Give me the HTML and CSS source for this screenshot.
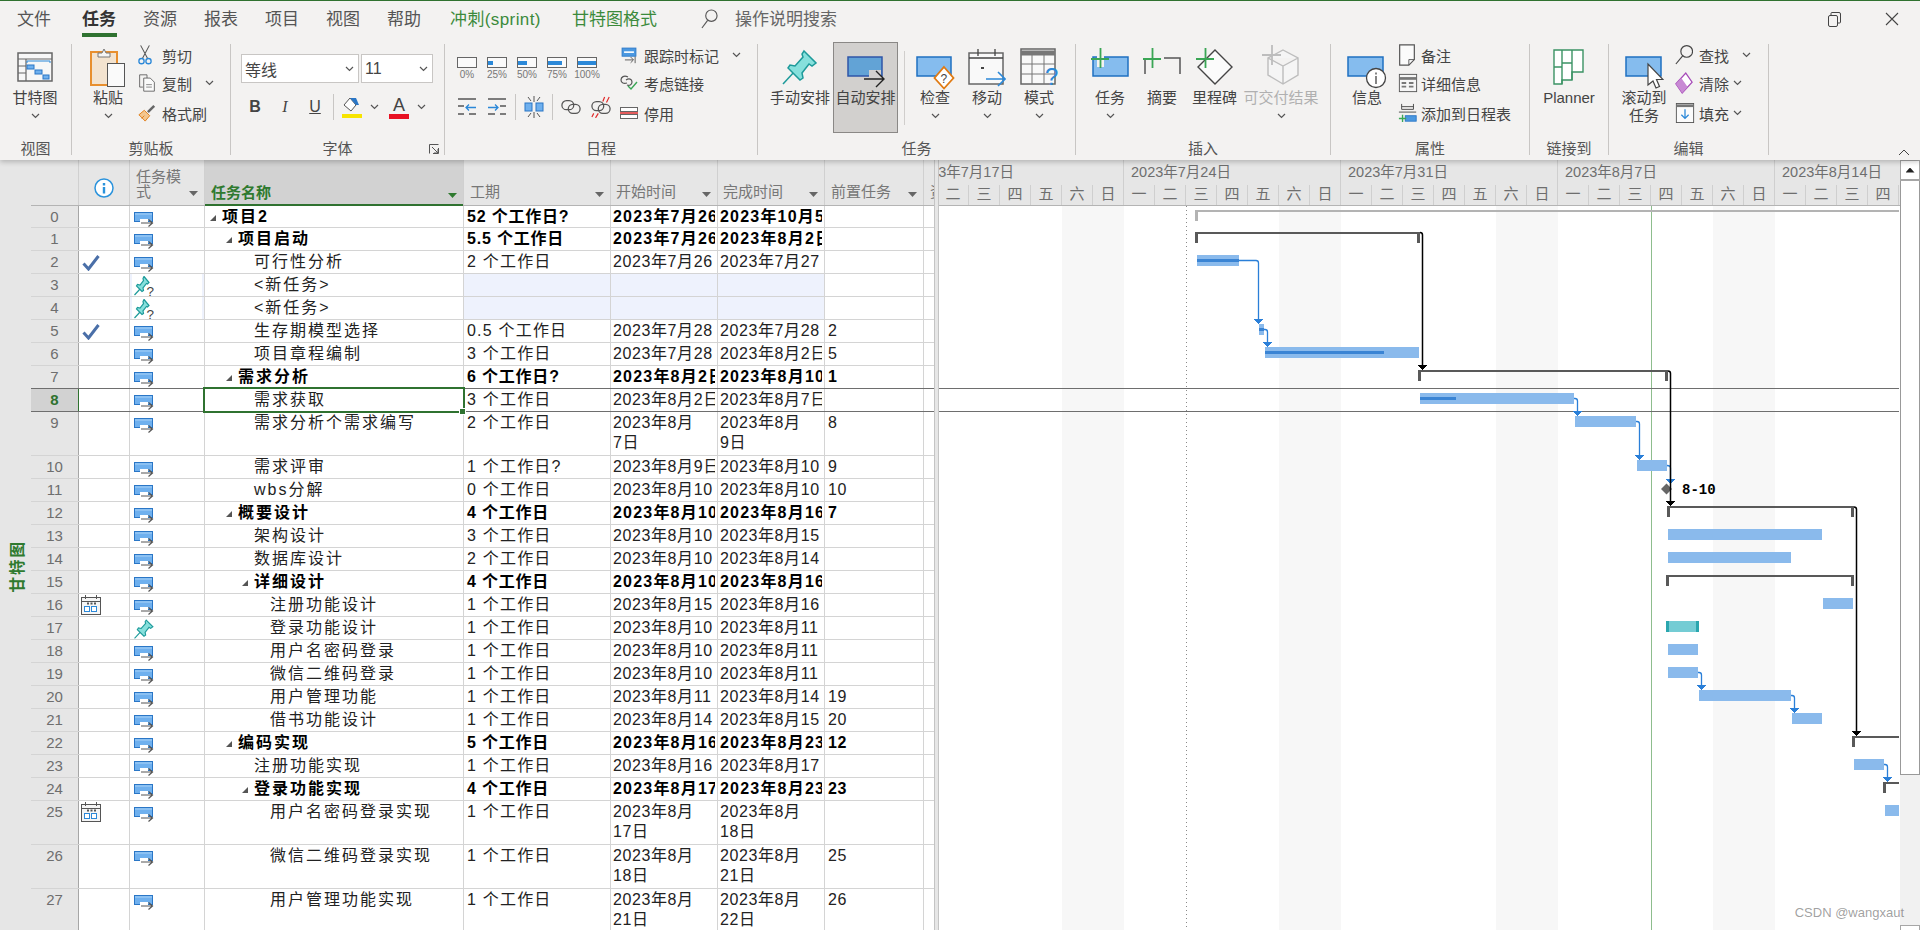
FILE: index.html
```html
<!DOCTYPE html>
<html lang="zh-CN">
  <head>
    <meta charset="UTF-8" />
    <title>项目2 - Project</title>
    <link rel="stylesheet" href="styles.css">
  </head>
  <body>
    <!-- 图标 -->
    <svg class="sprite" xmlns="http://www.w3.org/2000/svg">
      <symbol id="i-auto" viewBox="0 0 20 16">
        <rect x="0.5" y="0.5" width="18" height="9" fill="#6fb0ee" stroke="#2a76c6"/>
        <path d="M1 2h17" stroke="#a9d2f7"/>
        <path d="M6 7h8v4h5v4H6z" fill="#fff"/>
        <path d="M7 11h11M14.5 7.500l4 3.500-4 3.500" fill="none" stroke="#555" stroke-width="1.200"/>
      </symbol>
      <symbol id="i-pin" viewBox="0 0 36 36">
        <path d="M1 35L13 22" stroke="#1d9a9a" stroke-width="2"/>
        <path d="M22 2L34 14 30 17 27 15 20 24 21 29 18 31 6 19 8 16 13 17 21 8 20 5z" fill="#86e0dc" stroke="#1d9a9a" stroke-width="2"/>
      </symbol>
      <symbol id="i-pinq" viewBox="0 0 40 40">
        <path d="M1 38L13 25" stroke="#1d9a9a" stroke-width="2.400"/>
        <path d="M20 1L30 13 27 16 25 15 18 24 19 29 16 31 5 20 7 17 12 18 19 9 18 5z" fill="#86e0dc" stroke="#1d9a9a" stroke-width="2.400"/>
        <text x="25" y="39" font-size="27" font-family="Liberation Sans" fill="#444">?</text>
      </symbol>
      <symbol id="i-check" viewBox="0 0 18 16">
        <path d="M1.500 8.500l5 5.500L16.500 1" fill="none" stroke="#4a6fa8" stroke-width="3"/>
      </symbol>
      <symbol id="i-cal" viewBox="0 0 20 20">
        <rect x="0.500" y="2.500" width="19" height="17" fill="#f5f5f5" stroke="#555"/>
        <path d="M1 6.500h18M4.500 0v4M15.500 0v4" stroke="#555"/>
        <path d="M6 8.500h2M9.500 8.500h2M13 8.500h2" stroke="#555" stroke-width="2"/>
        <rect x="3.500" y="11.500" width="5" height="5" fill="#fff" stroke="#2b88d8"/>
        <rect x="10.500" y="11.500" width="5" height="5" fill="#fff" stroke="#2b88d8"/>
      </symbol>
      <symbol id="i-info" viewBox="0 0 20 20">
        <circle cx="10" cy="10" r="9" fill="#fff" stroke="#2b93dc" stroke-width="1.500"/>
        <path d="M10 5v2.500M10 9v6.500" stroke="#2b93dc" stroke-width="2.400"/>
      </symbol>
      <symbol id="i-chev" viewBox="0 0 9 6">
        <path d="M1 1l3.500 3.500L8 1" fill="none" stroke="#555" stroke-width="1.200"/>
      </symbol>
      <symbol id="i-gantt" viewBox="0 0 36 30">
        <rect x="1" y="1" width="34" height="28" fill="#f7f7f7" stroke="#666" stroke-width="1.500"/>
        <path d="M1 7h34M9 7v22M1 14h8M1 21h8" stroke="#666" stroke-width="1.200"/>
        <path d="M10 11V9h23v2" fill="none" stroke="#2b88d8"/>
        <rect x="10" y="13" width="7" height="4" fill="#6fb0ee" stroke="#2a76c6"/>
        <rect x="18" y="18" width="7" height="4" fill="#6fb0ee" stroke="#2a76c6"/>
        <rect x="26" y="23" width="6" height="4" fill="#6fb0ee" stroke="#2a76c6"/>
      </symbol>
      <symbol id="i-paste" viewBox="0 0 36 40">
        <rect x="1" y="5" width="26" height="33" fill="#f3e3cf" stroke="#e88f2e" stroke-width="2"/>
        <path d="M8 10V6h4l2-4 2 4h4v4z" fill="#f5f5f5" stroke="#777"/>
        <rect x="17.500" y="16.500" width="17" height="23" fill="#fafafa" stroke="#555"/>
      </symbol>
      <symbol id="i-cut" viewBox="0 0 16 24">
        <path d="M3 1l8 15M13 1L5 16" stroke="#555" fill="none" stroke-width="1.200"/>
        <circle cx="4" cy="19" r="3" fill="none" stroke="#2b88d8" stroke-width="1.500"/>
        <circle cx="12" cy="19" r="3" fill="none" stroke="#2b88d8" stroke-width="1.500"/>
      </symbol>
      <symbol id="i-copy" viewBox="0 0 20 22">
        <path d="M1 1h9v4M1 1v15h4" fill="none" stroke="#555"/>
        <path d="M6 5h8l5 5v11H6z" fill="#fafafa" stroke="#555"/>
        <path d="M9 13h7M9 16h7" stroke="#777"/>
      </symbol>
      <symbol id="i-brush" viewBox="0 0 20 20">
        <path d="M1 12l6-5 6 6-5 6z" fill="#f3c68f" stroke="#e07a12"/>
        <path d="M10 8l7-7 2 2-7 7z" fill="#666"/>
        <path d="M4 16l3-3" stroke="#e07a12"/>
      </symbol>
      <symbol id="i-fill" viewBox="0 0 20 22">
        <path d="M2 9l6-7 6 7-5 6z" fill="#fff" stroke="#555"/>
        <path d="M8 2l6 7h3l-3-7z" fill="#2a76c6"/>
        <rect x="0" y="18" width="20" height="4" fill="#f7e400"/>
      </symbol>
      <symbol id="i-outdent" viewBox="0 0 20 18">
        <path d="M1 1h18M1 8h6M1 16h6M12 16h7M14 1" stroke="#555" stroke-width="1.300"/>
        <path d="M19 9.500H9M12 6.500l-3 3 3 3" fill="none" stroke="#2b88d8" stroke-width="1.300"/>
      </symbol>
      <symbol id="i-indent" viewBox="0 0 20 18">
        <path d="M1 1h18M13 8h6M13 16h6M1 16h7" stroke="#555" stroke-width="1.300"/>
        <path d="M1 9.500h10M8 6.500l3 3-3 3" fill="none" stroke="#2b88d8" stroke-width="1.300"/>
      </symbol>
      <symbol id="i-split" viewBox="0 0 20 22">
        <rect x="1" y="7" width="7" height="8" fill="#6fb0ee" stroke="#2a76c6"/>
        <rect x="12" y="7" width="7" height="8" fill="#6fb0ee" stroke="#2a76c6"/>
        <path d="M10 0v6M10 16v6M4 1l3 4M16 1l-3 4M4 21l3-4M16 21l-3-4" stroke="#555"/>
      </symbol>
      <symbol id="i-link" viewBox="0 0 22 18">
        <rect x="1" y="2" width="13" height="10" rx="5" fill="none" stroke="#555" stroke-width="1.400"/>
        <rect x="8" y="6" width="13" height="10" rx="5" fill="none" stroke="#555" stroke-width="1.400"/>
      </symbol>
      <symbol id="i-unlink" viewBox="0 0 22 24">
        <rect x="1" y="6" width="13" height="10" rx="5" fill="none" stroke="#555" stroke-width="1.400"/>
        <rect x="8" y="9" width="13" height="10" rx="5" fill="none" stroke="#555" stroke-width="1.400"/>
        <path d="M15 1l-2 5M20 1l-3 6M3 19l-2 4M8 19l-3 5" stroke="#e02b2b" stroke-width="1.300"/>
      </symbol>
      <symbol id="i-track" viewBox="0 0 18 22">
        <rect x="0.500" y="2.500" width="17" height="10" fill="#4b98e0" stroke="#2a76c6"/>
        <path d="M3 7.500h12" stroke="#fff" stroke-width="2"/>
        <path d="M4 17h10M11 13.500l3.500 3.500-3.500 3.500M16.500 13v8" fill="none" stroke="#444"/>
      </symbol>
      <symbol id="i-respect" viewBox="0 0 18 16">
        <path d="M8 2C4 0 1 2 1 5s3 4 6 3M6 5c3-2 6-1 6 2s-3 4-5 3" fill="none" stroke="#555" stroke-width="1.200"/>
        <path d="M8 11l3 3 6-7" fill="none" stroke="#3aa655" stroke-width="1.400"/>
      </symbol>
      <symbol id="i-inactive" viewBox="0 0 18 14">
        <rect x="0.500" y="1.500" width="17" height="4" fill="#fff" stroke="#666"/>
        <rect x="0.500" y="8.500" width="17" height="4" fill="#fff" stroke="#666"/>
        <path d="M0 7h18" stroke="#e02b2b" stroke-width="1.500"/>
      </symbol>
      <symbol id="i-manual" viewBox="0 0 36 36">
        <path d="M1 35L13 22" stroke="#1d9a9a" stroke-width="1.500"/>
        <path d="M22 2L34 14 30 17 27 15 20 24 21 29 18 31 6 19 8 16 13 17 21 8 20 5z" fill="#86e0dc" stroke="#1d9a9a" stroke-width="1.500"/>
      </symbol>
      <symbol id="i-autobig" viewBox="0 0 38 36">
        <rect x="1" y="1" width="34" height="19" fill="#62a3d6" stroke="#2f55a8" stroke-width="1.500"/>
        <path d="M22 20v-6h12v16H22z" fill="#d2d0ce"/>
        <path d="M17 23h20M29 15l8 8-8 8" fill="none" stroke="#222" stroke-width="1.400"/>
      </symbol>
      <symbol id="i-inspect" viewBox="0 0 38 36">
        <rect x="1" y="1" width="34" height="19" fill="#85bcee" stroke="#1f70c1" stroke-width="1.500"/>
        <path d="M28 11l9.500 11L28 32.500 18.500 22z" fill="#fff" stroke="#e07a12" stroke-width="1.800"/>
        <text x="24.500" y="27" font-size="12" font-family="Liberation Sans" fill="#444">?</text>
      </symbol>
      <symbol id="i-move" viewBox="0 0 38 44">
        <rect x="1" y="8" width="34" height="31" fill="#f9f9f9" stroke="#666" stroke-width="1.500"/>
        <path d="M1 13h34M10 4v7M27 4v7" stroke="#444" stroke-width="1.300"/>
        <path d="M13 23h3" stroke="#444" stroke-width="2"/>
        <path d="M18 34h19M30 27l7 7-7 7" fill="none" stroke="#2b88d8" stroke-width="1.600"/>
      </symbol>
      <symbol id="i-mode" viewBox="0 0 38 44">
        <rect x="1" y="4" width="34" height="35" fill="#f9f9f9" stroke="#666" stroke-width="1.500"/>
        <path d="M1 8h34" stroke="#777" stroke-width="5"/>
        <path d="M12 10v29M24 10v29M1 19h34M1 29h34" stroke="#777"/>
        <text x="25" y="40" font-size="24" font-family="Liberation Sans" fill="#2b88d8">?</text>
      </symbol>
      <symbol id="i-newtask" viewBox="0 0 38 40">
        <rect x="2" y="12" width="35" height="19" fill="#85bcee" stroke="#1f70c1" stroke-width="1.500"/>
        <rect x="6" y="11" width="7" height="11" fill="#f3f2f1"/>
        <path d="M9.500 3v20M0 14h18" stroke="#3aa655" stroke-width="1.800"/>
      </symbol>
      <symbol id="i-summary" viewBox="0 0 38 40">
        <path d="M2 14v15M21 13h16v16" fill="none" stroke="#555" stroke-width="1.500"/>
        <path d="M9.500 3v20M0 14h18" stroke="#3aa655" stroke-width="1.800"/>
      </symbol>
      <symbol id="i-mile" viewBox="0 0 38 40">
        <path d="M19 5l17 17-17 17L2 22z" fill="#fbfbfb" stroke="#444" stroke-width="1.400"/>
        <path d="M9.500 3v20M0 14h18" stroke="#3aa655" stroke-width="1.800"/>
      </symbol>
      <symbol id="i-deliver" viewBox="0 0 38 40">
        <path d="M21 5l15 8v17l-15 9-15-9V13zM6 13l15 8 15-8M21 21v18" fill="#f5f5f5" stroke="#bdbdbd" stroke-width="1.400"/>
        <path d="M10 0v20M0 10h19" stroke="#bdbdbd" stroke-width="1.800"/>
      </symbol>
      <symbol id="i-infobig" viewBox="0 0 40 36">
        <rect x="1" y="1" width="35" height="19" fill="#85bcee" stroke="#1f70c1" stroke-width="1.500"/>
        <circle cx="29" cy="22" r="9.500" fill="#fff" stroke="#444" stroke-width="1.300"/>
        <path d="M29 16.500v2M29 20v8" stroke="#444" stroke-width="1.300"/>
      </symbol>
      <symbol id="i-note" viewBox="0 0 18 24">
        <path d="M1 1h16v16l-6 6H1z" fill="#fbfbfb" stroke="#555" stroke-width="1.300"/>
        <path d="M11 23v-6h6" fill="none" stroke="#555"/>
      </symbol>
      <symbol id="i-detail" viewBox="0 0 20 22">
        <rect x="0.500" y="1.500" width="19" height="19" fill="#f5f5f5" stroke="#555"/>
        <path d="M1 6h18" stroke="#777" stroke-width="3"/>
        <path d="M3 11h5M3 15h5M11 11h5M11 15h5" stroke="#777" stroke-width="2"/>
      </symbol>
      <symbol id="i-addtl" viewBox="0 0 20 22">
        <path d="M3 1v6h13V1M3 4h13M0 10h19" fill="none" stroke="#444"/>
        <rect x="7" y="14" width="12" height="6" fill="#4b98e0" stroke="#2a76c6"/>
        <path d="M4 13v8M0 17h8" stroke="#3aa655" stroke-width="1.500"/>
      </symbol>
      <symbol id="i-planner" viewBox="0 0 32 36">
        <path d="M1 1h29v22H19v8H9v4H1z" fill="#fff" stroke="#3b9364" stroke-width="1.400"/>
        <path d="M9 1v34M19 1v30M1 18h8M9 14h10" stroke="#3b9364" stroke-width="1.400"/>
      </symbol>
      <symbol id="i-scroll" viewBox="0 0 40 36">
        <rect x="2" y="1" width="35" height="19" fill="#85bcee" stroke="#1f70c1" stroke-width="1.500"/>
        <path d="M24 8v21l5-4 3 7 3.500-1.500-3-7H39z" fill="#fff" stroke="#444" stroke-width="1.200"/>
      </symbol>
      <symbol id="i-find" viewBox="0 0 20 24">
        <circle cx="13" cy="8" r="6.500" fill="none" stroke="#444" stroke-width="1.300"/>
        <path d="M8.500 13L1 22" stroke="#444" stroke-width="1.300"/>
      </symbol>
      <symbol id="i-clear" viewBox="0 0 20 24">
        <path d="M12 1l7 10-11 12L1 13z" fill="#fff" stroke="#a64ab8" stroke-width="1.400"/>
        <path d="M1 13l7 10 6-6.500-7-10z" fill="#c88ad4"/>
      </symbol>
      <symbol id="i-filld" viewBox="0 0 20 22">
        <rect x="0.500" y="0.500" width="19" height="21" fill="#fbfbfb" stroke="#555"/>
        <path d="M1 3h18" stroke="#777" stroke-width="3"/>
        <path d="M10 7v10M6 13l4 4 4-4" fill="none" stroke="#2b88d8" stroke-width="1.400"/>
      </symbol>
      <symbol id="i-search" viewBox="0 0 18 22">
        <circle cx="11" cy="7" r="6" fill="none" stroke="#555" stroke-width="1.200"/>
        <path d="M7 12l-6 8" stroke="#555" stroke-width="1.200"/>
      </symbol>
      <symbol id="i-restore" viewBox="0 0 13 15">
        <rect x="0.500" y="3.500" width="9" height="11" rx="1.500" fill="none" stroke="#444"/>
        <path d="M3 3V1.500Q3 .5 4 .5h7q1.500 0 1.500 1.500v8q0 1-1 1H10" fill="none" stroke="#444"/>
      </symbol>
      <symbol id="i-close" viewBox="0 0 14 14">
        <path d="M1 1l12 12M13 1L1 13" stroke="#444" stroke-width="1.100"/>
      </symbol>
    </svg>

    <header class="ribbon">
      <nav class="tabs">
        <span class="tab t-file">文件</span>
        <span class="tab t-on">任务</span>
        <span class="tab">资源</span>
        <span class="tab">报表</span>
        <span class="tab">项目</span>
        <span class="tab">视图</span>
        <span class="tab">帮助</span>
        <span class="tab t-green t-sprint">冲刺(sprint)</span>
        <span class="tab t-green t-format">甘特图格式</span>
        <svg class="ic-search"><use href="#i-search"/></svg>
        <span class="tab t-search">操作说明搜索</span>
        <svg class="ic-restore"><use href="#i-restore"/></svg>
        <svg class="ic-close"><use href="#i-close"/></svg>
      </nav>

      <div class="groups">
        <section class="group g-view">
          <div class="body">
            <div class="big w-70"><div class="bi"><svg class="s36x30"><use href="#i-gantt"/></svg></div><span>甘特图</span><svg class="chev"><use href="#i-chev"/></svg></div>
          </div>
          <div class="glabel">视图</div>
        </section>

        <section class="group g-clip">
          <div class="body">
            <div class="big w-60"><div class="bi"><svg class="s36x40"><use href="#i-paste"/></svg></div><span>粘贴</span><svg class="chev"><use href="#i-chev"/></svg></div>
            <div class="col">
              <div class="sm"><span class="si"><svg class="s14x22"><use href="#i-cut"/></svg></span>剪切</div>
              <div class="sm"><span class="si"><svg class="s18"><use href="#i-copy"/></svg></span>复制<svg class="chev ml-13"><use href="#i-chev"/></svg></div>
              <div class="sm"><span class="si"><svg class="s18"><use href="#i-brush"/></svg></span>格式刷</div>
            </div>
          </div>
          <div class="glabel">剪贴板</div>
        </section>

        <section class="group g-font">
          <div class="body fontbody">
            <div class="combos">
              <div class="combo c-name">等线<svg class="chev"><use href="#i-chev"/></svg></div>
              <div class="combo c-size">11<svg class="chev"><use href="#i-chev"/></svg></div>
            </div>
            <div class="fmt">
              <span class="fb f-b">B</span>
              <span class="fb f-i">I</span>
              <span class="fb f-u">U</span>
              <i class="vsep"></i>
              <svg class="s-fill"><use href="#i-fill"/></svg>
              <svg class="chev fchev"><use href="#i-chev"/></svg>
              <span class="f-a">A</span>
              <svg class="chev fchev"><use href="#i-chev"/></svg>
            </div>
          </div>
          <div class="glabel">字体</div>
          <svg class="launcher" viewBox="0 0 10 10"><path d="M.5 9.500V.5h9M9.500 4v5.500H4M3 3l6 6M9 5v4H5" fill="none" stroke="#555"/></svg>
        </section>

        <section class="group g-sched">
          <div class="body">
            <div class="pctblock">
              <div class="pcts">
                <div class="pct"><i class="pbox"></i>0%</div>
                <div class="pct"><i class="pbox"><b class="p25"></b></i>25%</div>
                <div class="pct"><i class="pbox"><b class="p50"></b></i>50%</div>
                <div class="pct"><i class="pbox"><b class="p75"></b></i>75%</div>
                <div class="pct"><i class="pbox"><b class="p100"></b></i>100%</div>
              </div>
              <div class="links">
                <span class="li"><svg class="s20x18"><use href="#i-outdent"/></svg></span>
                <span class="li"><svg class="s20x18"><use href="#i-indent"/></svg></span>
                <i class="vsep"></i>
                <span class="li"><svg class="s20x22"><use href="#i-split"/></svg></span>
                <i class="vsep"></i>
                <span class="li"><svg class="s20x18"><use href="#i-link"/></svg></span>
                <span class="li"><svg class="s20x22"><use href="#i-unlink"/></svg></span>
              </div>
            </div>
            <div class="col">
              <div class="sm"><span class="si"><svg class="s18"><use href="#i-track"/></svg></span>跟踪时标记<svg class="chev ml-13"><use href="#i-chev"/></svg></div>
              <div class="sm"><span class="si"><svg class="s18"><use href="#i-respect"/></svg></span>考虑链接</div>
              <div class="sm"><span class="si"><svg class="s18"><use href="#i-inactive"/></svg></span>停用</div>
            </div>
          </div>
          <div class="glabel">日程</div>
        </section>

        <section class="group g-task">
          <div class="body">
            <div class="big w-66"><div class="bi"><svg class="s36"><use href="#i-manual"/></svg></div><span>手动安排</span></div>
            <div class="big w-65 active"><div class="bi"><svg class="low"><use href="#i-autobig"/></svg></div><span>自动安排</span></div>
            <i class="tsep"></i>
            <div class="big w-52"><div class="bi"><svg class="low"><use href="#i-inspect"/></svg></div><span>检查</span><svg class="chev"><use href="#i-chev"/></svg></div>
            <div class="big w-52"><div class="bi"><svg class="s38x44"><use href="#i-move"/></svg></div><span>移动</span><svg class="chev"><use href="#i-chev"/></svg></div>
            <div class="big w-52"><div class="bi"><svg class="s38x44"><use href="#i-mode"/></svg></div><span>模式</span><svg class="chev"><use href="#i-chev"/></svg></div>
          </div>
          <div class="glabel">任务</div>
        </section>

        <section class="group g-insert">
          <div class="body">
            <div class="big w-52"><div class="bi"><svg class="s38x40"><use href="#i-newtask"/></svg></div><span>任务</span><svg class="chev"><use href="#i-chev"/></svg></div>
            <div class="big w-52"><div class="bi"><svg class="s38x40"><use href="#i-summary"/></svg></div><span>摘要</span></div>
            <div class="big w-53"><div class="bi"><svg class="s38x40"><use href="#i-mile"/></svg></div><span>里程碑</span></div>
            <div class="big w-80 off"><div class="bi"><svg class="s38x40"><use href="#i-deliver"/></svg></div><span>可交付结果</span><svg class="chev"><use href="#i-chev"/></svg></div>
          </div>
          <div class="glabel">插入</div>
        </section>

        <section class="group g-prop">
          <div class="body">
            <div class="big w-56"><div class="bi"><svg class="low"><use href="#i-infobig"/></svg></div><span>信息</span></div>
            <div class="col col-prop">
              <div class="sm"><span class="si"><svg class="s18x22"><use href="#i-note"/></svg></span>备注</div>
              <div class="sm"><span class="si"><svg class="s20"><use href="#i-detail"/></svg></span>详细信息</div>
              <div class="sm"><span class="si"><svg class="s20"><use href="#i-addtl"/></svg></span>添加到日程表</div>
            </div>
          </div>
          <div class="glabel">属性</div>
        </section>

        <section class="group g-link">
          <div class="body">
            <div class="big w-78"><div class="bi"><svg class="s32x36"><use href="#i-planner"/></svg></div><span>Planner</span></div>
          </div>
          <div class="glabel">链接到</div>
        </section>

        <section class="group g-edit">
          <div class="body">
            <div class="big w-62"><div class="bi"><svg class="low"><use href="#i-scroll"/></svg></div><span>滚动到<br>任务</span></div>
            <div class="col">
              <div class="sm"><span class="si"><svg class="s18x22"><use href="#i-find"/></svg></span>查找<svg class="chev ml-13"><use href="#i-chev"/></svg></div>
              <div class="sm"><span class="si"><svg class="s18x22"><use href="#i-clear"/></svg></span>清除<svg class="chev ml-4"><use href="#i-chev"/></svg></div>
              <div class="sm"><span class="si"><svg class="s20"><use href="#i-filld"/></svg></span>填充<svg class="chev ml-4"><use href="#i-chev"/></svg></div>
            </div>
          </div>
          <div class="glabel">编辑</div>
        </section>

        <svg class="collapse" viewBox="0 0 12 7"><path d="M1 6l5-5 5 5" fill="none" stroke="#444"/></svg>
      </div>
    </header>

    <main class="main">
      <div class="viewbar"><span>甘特图</span></div>

      <div class="sheet">
        <div class="row head">
          <div class="hc"></div>
          <div class="hc hc-info"><svg class="s20"><use href="#i-info"/></svg></div>
          <div class="hc hc-mode"><span>任务模<br>式</span><i class="drop"></i></div>
          <div class="hc hc-name"><span>任务名称</span><i class="drop"></i></div>
          <div class="hc"><span>工期</span><i class="drop"></i></div>
          <div class="hc hc-d"><span>开始时间</span><i class="drop"></i></div>
          <div class="hc hc-d"><span>完成时间</span><i class="drop"></i></div>
          <div class="hc"><span>前置任务</span><i class="drop"></i></div>
          <div class="hc hc-cut"><span>资源名称</span></div>
        </div>

        <div class="row r0 sum"><div class="num">0</div><div></div><div class="mode"><svg class="mi"><use href="#i-auto"/></svg></div><div class="name l0"><i class="tri"></i>项目2</div><div class="dur">52 个工作日?</div><div class="date">2023年7月26日</div><div class="date">2023年10月5日</div><div class="pred"></div><div></div></div>
        <div class="row sum"><div class="num">1</div><div></div><div class="mode"><svg class="mi"><use href="#i-auto"/></svg></div><div class="name l1"><i class="tri"></i>项目启动</div><div class="dur">5.5 个工作日</div><div class="date">2023年7月26日</div><div class="date">2023年8月2日</div><div class="pred"></div><div></div></div>
        <div class="row"><div class="num">2</div><div class="ind"><svg class="ci"><use href="#i-check"/></svg></div><div class="mode"><svg class="mi"><use href="#i-auto"/></svg></div><div class="name l2">可行性分析</div><div class="dur">2 个工作日</div><div class="date">2023年7月26</div><div class="date">2023年7月27</div><div class="pred"></div><div></div></div>
        <div class="row"><div class="num">3</div><div></div><div class="mode unset pinned"><svg class="mi"><use href="#i-pinq"/></svg></div><div class="name l2">&lt;新任务&gt;</div><div class="dur blank"></div><div class="date blank"></div><div class="date blank"></div><div class="pred"></div><div></div></div>
        <div class="row"><div class="num">4</div><div></div><div class="mode unset pinned"><svg class="mi"><use href="#i-pinq"/></svg></div><div class="name l2">&lt;新任务&gt;</div><div class="dur blank"></div><div class="date blank"></div><div class="date blank"></div><div class="pred"></div><div></div></div>
        <div class="row"><div class="num">5</div><div class="ind"><svg class="ci"><use href="#i-check"/></svg></div><div class="mode"><svg class="mi"><use href="#i-auto"/></svg></div><div class="name l2">生存期模型选择</div><div class="dur">0.5 个工作日</div><div class="date">2023年7月28</div><div class="date">2023年7月28</div><div class="pred">2</div><div></div></div>
        <div class="row"><div class="num">6</div><div></div><div class="mode"><svg class="mi"><use href="#i-auto"/></svg></div><div class="name l2">项目章程编制</div><div class="dur">3 个工作日</div><div class="date">2023年7月28</div><div class="date">2023年8月2日</div><div class="pred">5</div><div></div></div>
        <div class="row sum"><div class="num">7</div><div></div><div class="mode"><svg class="mi"><use href="#i-auto"/></svg></div><div class="name l1"><i class="tri"></i>需求分析</div><div class="dur">6 个工作日?</div><div class="date">2023年8月2日</div><div class="date">2023年8月10日</div><div class="pred">1</div><div></div></div>
        <div class="row sel"><div class="num">8</div><div class="ind"></div><div class="mode"><svg class="mi"><use href="#i-auto"/></svg></div><div class="name l2">需求获取</div><div class="dur">3 个工作日</div><div class="date">2023年8月2日</div><div class="date">2023年8月7日</div><div class="pred"></div><div></div></div>
        <div class="row tall"><div class="num">9</div><div></div><div class="mode"><svg class="mi"><use href="#i-auto"/></svg></div><div class="name l2">需求分析个需求编写</div><div class="dur">2 个工作日</div><div class="date">2023年8月<br>7日</div><div class="date">2023年8月<br>9日</div><div class="pred">8</div><div></div></div>
        <div class="row"><div class="num">10</div><div></div><div class="mode"><svg class="mi"><use href="#i-auto"/></svg></div><div class="name l2">需求评审</div><div class="dur">1 个工作日?</div><div class="date">2023年8月9日</div><div class="date">2023年8月10</div><div class="pred">9</div><div></div></div>
        <div class="row"><div class="num">11</div><div></div><div class="mode"><svg class="mi"><use href="#i-auto"/></svg></div><div class="name l2">wbs分解</div><div class="dur">0 个工作日</div><div class="date">2023年8月10</div><div class="date">2023年8月10</div><div class="pred">10</div><div></div></div>
        <div class="row sum"><div class="num">12</div><div></div><div class="mode"><svg class="mi"><use href="#i-auto"/></svg></div><div class="name l1"><i class="tri"></i>概要设计</div><div class="dur">4 个工作日</div><div class="date">2023年8月10日</div><div class="date">2023年8月16日</div><div class="pred">7</div><div></div></div>
        <div class="row"><div class="num">13</div><div></div><div class="mode"><svg class="mi"><use href="#i-auto"/></svg></div><div class="name l2">架构设计</div><div class="dur">3 个工作日</div><div class="date">2023年8月10</div><div class="date">2023年8月15</div><div class="pred"></div><div></div></div>
        <div class="row"><div class="num">14</div><div></div><div class="mode"><svg class="mi"><use href="#i-auto"/></svg></div><div class="name l2">数据库设计</div><div class="dur">2 个工作日</div><div class="date">2023年8月10</div><div class="date">2023年8月14</div><div class="pred"></div><div></div></div>
        <div class="row sum"><div class="num">15</div><div></div><div class="mode"><svg class="mi"><use href="#i-auto"/></svg></div><div class="name l2"><i class="tri"></i>详细设计</div><div class="dur">4 个工作日</div><div class="date">2023年8月10日</div><div class="date">2023年8月16日</div><div class="pred"></div><div></div></div>
        <div class="row"><div class="num">16</div><div class="ind"><svg class="cal"><use href="#i-cal"/></svg></div><div class="mode"><svg class="mi"><use href="#i-auto"/></svg></div><div class="name l3">注册功能设计</div><div class="dur">1 个工作日</div><div class="date">2023年8月15</div><div class="date">2023年8月16</div><div class="pred"></div><div></div></div>
        <div class="row"><div class="num">17</div><div></div><div class="mode pinned"><svg class="mi"><use href="#i-pin"/></svg></div><div class="name l3">登录功能设计</div><div class="dur">1 个工作日</div><div class="date">2023年8月10</div><div class="date">2023年8月11</div><div class="pred"></div><div></div></div>
        <div class="row"><div class="num">18</div><div></div><div class="mode"><svg class="mi"><use href="#i-auto"/></svg></div><div class="name l3">用户名密码登录</div><div class="dur">1 个工作日</div><div class="date">2023年8月10</div><div class="date">2023年8月11</div><div class="pred"></div><div></div></div>
        <div class="row"><div class="num">19</div><div></div><div class="mode"><svg class="mi"><use href="#i-auto"/></svg></div><div class="name l3">微信二维码登录</div><div class="dur">1 个工作日</div><div class="date">2023年8月10</div><div class="date">2023年8月11</div><div class="pred"></div><div></div></div>
        <div class="row"><div class="num">20</div><div></div><div class="mode"><svg class="mi"><use href="#i-auto"/></svg></div><div class="name l3">用户管理功能</div><div class="dur">1 个工作日</div><div class="date">2023年8月11</div><div class="date">2023年8月14</div><div class="pred">19</div><div></div></div>
        <div class="row"><div class="num">21</div><div></div><div class="mode"><svg class="mi"><use href="#i-auto"/></svg></div><div class="name l3">借书功能设计</div><div class="dur">1 个工作日</div><div class="date">2023年8月14</div><div class="date">2023年8月15</div><div class="pred">20</div><div></div></div>
        <div class="row sum"><div class="num">22</div><div></div><div class="mode"><svg class="mi"><use href="#i-auto"/></svg></div><div class="name l1"><i class="tri"></i>编码实现</div><div class="dur">5 个工作日</div><div class="date">2023年8月16日</div><div class="date">2023年8月23日</div><div class="pred">12</div><div></div></div>
        <div class="row"><div class="num">23</div><div></div><div class="mode"><svg class="mi"><use href="#i-auto"/></svg></div><div class="name l2">注册功能实现</div><div class="dur">1 个工作日</div><div class="date">2023年8月16</div><div class="date">2023年8月17</div><div class="pred"></div><div></div></div>
        <div class="row sum"><div class="num">24</div><div></div><div class="mode"><svg class="mi"><use href="#i-auto"/></svg></div><div class="name l2"><i class="tri"></i>登录功能实现</div><div class="dur">4 个工作日</div><div class="date">2023年8月17日</div><div class="date">2023年8月23日</div><div class="pred">23</div><div></div></div>
        <div class="row tall"><div class="num">25</div><div class="ind"><svg class="cal"><use href="#i-cal"/></svg></div><div class="mode"><svg class="mi"><use href="#i-auto"/></svg></div><div class="name l3">用户名密码登录实现</div><div class="dur">1 个工作日</div><div class="date">2023年8月<br>17日</div><div class="date">2023年8月<br>18日</div><div class="pred"></div><div></div></div>
        <div class="row tall"><div class="num">26</div><div></div><div class="mode"><svg class="mi"><use href="#i-auto"/></svg></div><div class="name l3">微信二维码登录实现</div><div class="dur">1 个工作日</div><div class="date">2023年8月<br>18日</div><div class="date">2023年8月<br>21日</div><div class="pred">25</div><div></div></div>
        <div class="row tall"><div class="num">27</div><div></div><div class="mode"><svg class="mi"><use href="#i-auto"/></svg></div><div class="name l3">用户管理功能实现</div><div class="dur">1 个工作日</div><div class="date">2023年8月<br>21日</div><div class="date">2023年8月<br>22日</div><div class="pred">26</div><div></div></div>
      </div>

      <div class="splitter"></div>

      <div class="gantt">
        <div class="scale">
          <div class="week"><div class="wk">2023年7月17日</div><div class="days"><span>一</span><span>二</span><span>三</span><span>四</span><span>五</span><span>六</span><span>日</span></div></div>
          <div class="week"><div class="wk">2023年7月24日</div><div class="days"><span>一</span><span>二</span><span>三</span><span>四</span><span>五</span><span>六</span><span>日</span></div></div>
          <div class="week"><div class="wk">2023年7月31日</div><div class="days"><span>一</span><span>二</span><span>三</span><span>四</span><span>五</span><span>六</span><span>日</span></div></div>
          <div class="week"><div class="wk">2023年8月7日</div><div class="days"><span>一</span><span>二</span><span>三</span><span>四</span><span>五</span><span>六</span><span>日</span></div></div>
          <div class="week"><div class="wk">2023年8月14日</div><div class="days"><span>一</span><span>二</span><span>三</span><span>四</span><span>五</span><span>六</span><span>日</span></div></div>
        </div>

        <!-- 甘特图画布，坐标按屏幕像素写，所以整体平移 -->
        <svg class="canvas" width="961" height="724" xmlns="http://www.w3.org/2000/svg">
          <g transform="translate(-939 -206)">
            <path class="nowline" d="M1186.500 206V930"/>
            <path class="statusline" d="M1651.500 206V930"/>
            <path class="selline" d="M939 388.500H1899M939 411.500H1899"/>

            <path class="sumall" d="M1195 210H1899V212H1198V221H1195Z"/>
            <g class="summ">
              <path d="M1195 232H1420V243H1417V234H1198V243H1195Z"/>
              <path d="M1418 370H1668V381H1665V372H1421V381H1418Z"/>
              <path d="M1667 506H1854V517H1851V508H1670V517H1667Z"/>
              <path d="M1666 575H1854V586H1851V577H1669V586H1666Z"/>
              <path d="M1852 736H1899V738H1855V747H1852Z"/>
              <path d="M1883 782H1899V784H1886V793H1883Z"/>
            </g>

            <g class="bar">
              <rect x="1197" y="255" width="42" height="11"/>
              <rect x="1259" y="324" width="5" height="11"/>
              <rect x="1265" y="347" width="154" height="11"/>
              <rect x="1420" y="393" width="154" height="11"/>
              <rect x="1575" y="416" width="61" height="11"/>
              <rect x="1637" y="460" width="30" height="11"/>
              <rect x="1668" y="529" width="154" height="11"/>
              <rect x="1668" y="552" width="123" height="11"/>
              <rect x="1823" y="598" width="30" height="11"/>
              <rect x="1668" y="644" width="30" height="11"/>
              <rect x="1668" y="667" width="30" height="11"/>
              <rect x="1699" y="690" width="92" height="11"/>
              <rect x="1792" y="713" width="30" height="11"/>
              <rect x="1854" y="759" width="30" height="11"/>
              <rect x="1885" y="805" width="14" height="11"/>
            </g>
            <g class="prog">
              <rect x="1197" y="259" width="42" height="3"/>
              <rect x="1259" y="328" width="5" height="3"/>
              <rect x="1265" y="351" width="119" height="3"/>
              <rect x="1420" y="397" width="36" height="3"/>
            </g>
            <rect class="manual" x="1666" y="621" width="33" height="11"/>
            <path class="manualcap" d="M1666 621h3v11h-3zM1696 621h3v11h-3z"/>

            <path class="mile" d="M1666.500 483.500l5.500 5.500-5.500 5.500-5.500-5.500z"/>
            <text class="milelabel" x="1682" y="494">8-10</text>

            <g class="blue">
              <path class="ln" d="M1239 260.500H1256q2.500 0 2.500 2.500V320"/>
              <path d="M1254 319h9l-4.500 5z"/>
              <path class="ln" d="M1264 329.500H1265q2.500 0 2.500 2.500V343"/>
              <path d="M1263 342h9l-4.500 5z"/>
              <path class="ln" d="M1574 398.500H1575q2.500 0 2.500 2.500V412"/>
              <path d="M1573 411h9l-4.500 5z"/>
              <path class="ln" d="M1636 421.500H1637q2.500 0 2.500 2.500V456"/>
              <path d="M1635 455h9l-4.500 5z"/>
              <path class="ln" d="M1667 465.500q3.500 0 3.500 2.500V480"/>
              <path d="M1666 479h9l-4.500 5z"/>
              <path class="ln" d="M1698 672.500H1699q2.500 0 2.500 2.500V686"/>
              <path d="M1697 685h9l-4.500 5z"/>
              <path class="ln" d="M1791 695.500H1792q2.500 0 2.500 2.500V709"/>
              <path d="M1790 708h9l-4.500 5z"/>
              <path class="ln" d="M1884 764.500H1885q2.500 0 2.500 2.500V778"/>
              <path d="M1883 777h9l-4.500 5z"/>
            </g>
            <g class="black">
              <path class="ln" d="M1420 232.500q2.500 0 2.500 2.500V366"/>
              <path d="M1418 365h9l-4.500 5z"/>
              <path class="ln" d="M1668 371q2.500 0 2.500 2.500V502"/>
              <path d="M1666 501h9l-4.500 5z"/>
              <path class="ln" d="M1854 507q2.500 0 2.500 2.500V732"/>
              <path d="M1852 731h9l-4.500 5z"/>
            </g>
          </g>
        </svg>
      </div>

      <div class="scrollbar">
        <div class="sb-btn"><i class="sb-up"></i></div>
        <div class="sb-thumb"></div>
        <div class="sb-track"></div>
        <div class="sb-btn sb-down"></div>
      </div>

      <div class="watermark">CSDN @wangxaut</div>
    </main>
  </body>
</html>
```

FILE: styles.css
```css
* {
  margin: 0;
  padding: 0;
  box-sizing: border-box;
}
html,body {
  width: 1920px;
  height: 930px;
  overflow: hidden;
}
body {
  display: flex;
  flex-direction: column;
  font-family: "Liberation Sans", "Noto Sans CJK SC", sans-serif;
  color: #444;
  background: #fff;
}
.sprite {
  display: none;
}
svg {
  flex: none;
  display: block;
}

/* 功能区 */
.ribbon {
  height: 160px;
  flex: none;
  background: #f3f2f1;
  border-top: 1px solid #2f7230;
  box-shadow: 0 2px 5px rgba(0,0,0,.22);
  position: relative;
  z-index: 3;
}
.tabs {
  height: 36px;
  display: flex;
  align-items: center;
  font-size: 17px;
}
.tab {
  width: 61px;
  flex: none;
  height: 36px;
  line-height: 38px;
  color: #555;
  white-space: nowrap;
}
.t-file {
  margin-left: 17px;
  width: 65px;
}
.t-on {
  font-weight: bold;
  color: #333;
  background: linear-gradient(#2f7230,#2f7230) 0 32px / 35px 4px no-repeat;
}
.t-green {
  color: #3b8a3b;
}
.t-sprint {
  width: 122px;
  margin-left: 2px;
  letter-spacing: .4px;
}
.t-format {
  width: 129px;
}
.ic-search {
  width: 17px;
  height: 21px;
}
.t-search {
  margin-left: 17px;
  width: 110px;
  color: #666;
}
.ic-restore {
  width: 13px;
  height: 15px;
  margin-left: 983px;
}
.ic-close {
  width: 14px;
  height: 14px;
  margin-left: 44px;
}
.groups {
  height: 123px;
  display: flex;
  padding-top: 7px;
  font-size: 15px;
  position: relative;
}
.group {
  flex: none;
  height: 111px;
  border-right: 1px solid #c8c6c4;
  position: relative;
}
.g-view { width: 72px; }
.g-clip { width: 159px; }
.g-font { width: 214px; }
.g-sched { width: 313px; }
.g-task { width: 318px; }
.g-insert { width: 255px; }
.g-prop { width: 199px; }
.g-link { width: 79px; }
.g-edit { width: 160px; }
.body {
  height: 94px;
  display: flex;
}
.g-clip .body { padding-left: 6px; }
.g-sched .body { padding-left: 7px; }
.g-task .body { padding-left: 9px; }
.g-insert .body { padding-left: 8px; }
.g-prop .body { padding-left: 8px; }
.g-edit .body { padding-left: 4px; }
.glabel {
  height: 17px;
  line-height: 22px;
  text-align: center;
  color: #555;
}
.big {
  flex: none;
  display: flex;
  flex-direction: column;
  align-items: center;
  line-height: 18px;
  text-align: center;
  white-space: nowrap;
}
.big .chev {
  margin-top: 6px;
}
.bi {
  height: 45px;
  display: flex;
  align-items: center;
  justify-content: center;
}
.w-52 { width: 52px; }
.w-53 { width: 53px; }
.w-56 { width: 56px; }
.w-60 { width: 60px; }
.w-62 { width: 62px; }
.w-65 { width: 65px; }
.w-66 { width: 66px; }
.w-70 { width: 70px; }
.w-78 { width: 78px; }
.w-80 { width: 80px; }
.big.active {
  background: #d2d0ce;
  border: 1px solid #8a8886;
  height: 91px;
  margin-top: -2px;
  padding-top: 1px;
}
.big.off {
  color: #b0b0b0;
}
.tsep {
  width: 1px;
  height: 74px;
  margin: 7px 4px 0 6px;
  background: #d0cecc;
  flex: none;
}
.col {
  display: flex;
  flex-direction: column;
  margin-top: -3px;
}
.col-prop {
  margin-left: 3px;
}
.sm {
  height: 28px;
  display: flex;
  align-items: center;
  white-space: nowrap;
  color: #444;
}
.sm:nth-child(3) {
  margin-top: 2px;
}
.si {
  width: 24px;
  flex: none;
}
.col-prop .si {
  width: 23px;
}
.chev {
  width: 9px;
  height: 6px;
}
.ml-13 { margin-left: 13px; }
.ml-4 { margin-left: 4px; }

/* 图标尺寸 */
.s36x30 { width: 36px; height: 30px; }
.s36x40 { width: 36px; height: 40px; }
.s14x22 { width: 14px; height: 22px; }
.s18 { width: 18px; height: 18px; }
.s18x22 { width: 18px; height: 22px; }
.s20 { width: 20px; height: 20px; }
.s20x18 { width: 20px; height: 18px; }
.s20x22 { width: 20px; height: 22px; }
.s36 { width: 36px; height: 36px; }
.s38x40 { width: 38px; height: 40px; margin-top: -4px; }
.s38x44 { width: 38px; height: 44px; }
.s32x36 { width: 32px; height: 36px; }
/* 蓝色矩形的大图标，上沿要落在 y=55 */
.low {
  width: 40px;
  height: 36px;
  margin-top: 14px;
}

/* 字体组 */
.fontbody {
  flex-direction: column;
  padding: 10px 0 0 9px;
}
.combos {
  display: flex;
  gap: 2px;
  margin-left: 1px;
}
.combo {
  height: 29px;
  background: #fff;
  border: 1px solid #c8c6c4;
  display: flex;
  align-items: center;
  justify-content: space-between;
  padding: 0 4px 0 3px;
  font-size: 16px;
}
.c-name { width: 118px; }
.c-size { width: 72px; }
.fmt {
  display: flex;
  align-items: center;
  height: 30px;
  margin-top: 9px;
}
.fb {
  width: 30px;
  text-align: center;
  font-size: 16px;
}
.f-b { font-weight: bold; }
.f-i { font-style: italic; font-family: "Liberation Serif", serif; }
.f-u { text-decoration: underline; }
.vsep {
  width: 1px;
  height: 26px;
  background: #c8c6c4;
  margin-left: 3px;
  flex: none;
}
.s-fill {
  width: 20px;
  height: 22px;
  margin-left: 8px;
}
.fchev {
  margin: 0 1px 0 8px;
}
.f-a {
  width: 20px;
  margin-left: 9px;
  text-align: center;
  font-size: 18px;
  line-height: 18px;
  border-bottom: 5px solid #e81123;
}
.launcher {
  position: absolute;
  right: 5px;
  bottom: 1px;
  width: 10px;
  height: 10px;
}

/* 日程组 */
.pctblock {
  width: 168px;
  flex: none;
}
.pcts {
  display: flex;
  padding-top: 13px;
}
.pct {
  width: 30px;
  display: flex;
  flex-direction: column;
  align-items: center;
  font-size: 10px;
  line-height: 13px;
  color: #777;
}
.pbox {
  width: 20px;
  height: 11px;
  border: 1px solid #666;
  background: #fafafa;
  display: flex;
  align-items: center;
}
.pbox b {
  height: 4px;
  background: #2b88d8;
}
.p25 { width: 25%; }
.p50 { width: 50%; }
.p75 { width: 75%; }
.p100 { width: 100%; }
.links {
  display: flex;
  align-items: center;
  height: 30px;
  margin-top: 11px;
}
.li {
  width: 30px;
  display: flex;
  justify-content: center;
  flex: none;
}
.links .li:nth-child(4),.links .li:nth-child(6) {
  margin-left: 3px;
}

/* 主体 */
.main {
  flex: 1;
  min-height: 0;
  display: flex;
  overflow: hidden;
  position: relative;
}
.viewbar {
  width: 31px;
  flex: none;
  background: #e6e6e6;
  display: flex;
  justify-content: center;
  align-items: flex-start;
  padding-top: 380px;
}
.viewbar span {
  writing-mode: vertical-rl;
  text-orientation: sideways;
  transform: rotate(180deg);
  white-space: nowrap;
  font-size: 15.500px;
  font-weight: bold;
  color: #2f7a2f;
  letter-spacing: 2px;
}
.sheet {
  width: 903px;
  flex: none;
}
.row {
  display: grid;
  grid-template-columns: 47px 50px 74px 258px 146px 106px 106px 98px 10px;
  column-gap: 1px;
  height: 23px;
  background: #d4d4d4;
  border-bottom: 1px solid #d4d4d4;
  font-size: 16px;
  line-height: 20px;
  color: #222;
}
.row > div {
  background: #fff;
  overflow: hidden;
  white-space: nowrap;
  padding-top: 1px;
}
.r0 {
  height: 22px;
}
.tall {
  height: 44px;
}
.row .num {
  background: #e6e6e6;
  text-align: center;
  color: #6e6e6e;
  font-size: 15px;
  box-shadow: 1px 0 0 #a6a6a6;
}
.mode {
  padding-left: 4px;
}
.mi {
  width: 20px;
  height: 16px;
  margin-top: 5px;
}
.pinned .mi {
  height: 20px;
  margin-top: 1px;
}
.row > .unset {
  box-shadow: inset 2px 0 #eef2fd, inset -2px 0 #eef2fd;
}
.ci {
  width: 18px;
  height: 16px;
  margin: 3px 0 0 3px;
}
.cal {
  width: 20px;
  height: 20px;
  margin-left: 2px;
}
.name {
  letter-spacing: 2px;
}
.l0 { padding-left: 17px; }
.l1 { padding-left: 33px; }
.l2 { padding-left: 49px; }
.l3 { padding-left: 65px; }
.tri {
  display: inline-block;
  width: 6px;
  height: 6px;
  margin: 0 6px 1px -12px;
  background: #555;
  clip-path: polygon(100% 0,100% 100%,0 100%);
}
.dur {
  padding-left: 3px;
  letter-spacing: 1.200px;
}
.row > .date {
  padding-left: 2px;
  letter-spacing: .6px;
  border-right: 2px solid #fff;
  line-height: 19.500px;
}
.pred {
  padding-left: 3px;
  letter-spacing: .6px;
}
.row > .blank {
  background: #eef2fd;
  border-color: #eef2fd;
}
.sum {
  font-weight: bold;
  color: #000;
}
.sum .num {
  font-weight: normal;
}
.sum .dur {
  letter-spacing: .8px;
}
.row.sum > .date {
  letter-spacing: 1.200px;
}

/* 选中行 */
.sel {
  height: 24px;
  margin-top: -1px;
  background: #d4d4d4;
  border-top: 1px solid #6e6e6e;
  border-bottom: 1px solid #6e6e6e;
}
.sel .num {
  background: #d2d2d2;
  color: #2f7230;
  font-weight: bold;
  box-shadow: 1px 0 0 #2f7230;
}
.sel .name {
  position: relative;
  overflow: visible;
  outline: 2px solid #2f7230;
  outline-offset: 0;
}
.sel .name::after {
  content: "";
  position: absolute;
  right: -3px;
  bottom: -4px;
  width: 5px;
  height: 5px;
  background: #2f7230;
  border: 1px solid #fff;
  box-sizing: content-box;
  z-index: 1;
}

/* 表头 */
.head {
  height: 46px;
  background: #d0d0d0;
  border-bottom: 1px solid #b4b4b4;
  font-size: 15px;
  line-height: 20px;
  color: #777;
}
.row > .hc {
  background: #e6e6e6;
  padding: 0 6px 3px;
  display: flex;
  align-items: flex-end;
  justify-content: space-between;
  overflow: hidden;
}
.row > .hc-d {
  padding-left: 5px;
}
.row > .hc-info {
  justify-content: center;
  padding-bottom: 7px;
}
.hc-mode span {
  line-height: 15px;
  letter-spacing: 0;
}
.row > .hc-mode {
  padding-bottom: 6px;
}
.row > .hc-name {
  background: #d2d2d2;
  color: #2f7a2f;
  font-weight: bold;
  box-shadow: inset 0 -2px 0 #2f7230;
  margin-bottom: -1px;
}
.hc-cut span {
  white-space: nowrap;
}
.row > .hc-cut {
  justify-content: flex-start;
}
.drop {
  width: 9px;
  height: 5px;
  margin-bottom: 5px;
  background: #666;
  clip-path: polygon(0 0,100% 0,50% 100%);
  flex: none;
}
.hc-mode .drop {
  margin-bottom: 3px;
}
.hc-name .drop {
  background: #2f7a2f;
}
.hc-name span, .hc-mode span {
  display: block;
}

.splitter {
  width: 5px;
  flex: none;
  background: #e6e6e6;
  border-left: 1px solid #c4c4c4;
  border-right: 1px solid #c4c4c4;
}

/* 甘特图 */
.gantt {
  width: 961px;
  flex: none;
  overflow: hidden;
  background: #fff linear-gradient(90deg,#f7f7f7 0 62px,transparent 62px) 123px 0 / 217px 100% repeat-x;
}
.scale {
  height: 46px;
  display: flex;
  margin-left: -32px;
  width: 1085px;
  background: #e6e6e6;
  border-bottom: 1px solid #b4b4b4;
  color: #6e6e6e;
  font-size: 14.500px;
}
.week {
  width: 217px;
  flex: none;
  border-right: 1px solid #cfcfcf;
  white-space: nowrap;
}
.wk {
  height: 25px;
  line-height: 25px;
  padding-left: 7px;
}
.days {
  display: grid;
  grid-template-columns: repeat(7,31px);
  margin-right: -1px;
}
.days span {
  height: 20px;
  line-height: 18px;
  text-align: center;
  font-size: 15px;
  border-right: 1px solid #cfcfcf;
}
.canvas {
  shape-rendering: crispEdges;
}
.canvas .nowline {
  stroke: #8a8a8a;
  stroke-dasharray: 1 3;
  fill: none;
}
.statusline {
  stroke: #8dbd8d;
  fill: none;
}
.selline {
  stroke: #6e6e6e;
  fill: none;
}
.sumall {
  fill: #b3b3b3;
}
.summ {
  fill: #595959;
}
.bar {
  fill: #8abaec;
}
.prog {
  fill: #3a84d4;
}
.manual {
  fill: #74ccd4;
}
.manualcap {
  fill: #2aa6ae;
}
.mile {
  fill: #666;
  shape-rendering: geometricPrecision;
}
.milelabel {
  font-family: "Liberation Mono", monospace;
  font-size: 14px;
  font-weight: bold;
  fill: #000;
  shape-rendering: auto;
}
.blue {
  fill: #2a7fd8;
}
.black {
  fill: #000;
}
.ln {
  fill: none;
  stroke-width: 1.300px;
  shape-rendering: geometricPrecision;
}
.blue .ln {
  stroke: #2a7fd8;
}
.black .ln {
  stroke: #000;
  stroke-width: 1.500px;
}

/* 滚动条 */
.scrollbar {
  width: 20px;
  flex: none;
  display: flex;
  flex-direction: column;
  background: #f1f1f1;
}
.sb-btn {
  height: 21px;
  flex: none;
  background: #fff;
  border: 1px solid #a6a6a6;
  border-bottom-width: 2px;
  display: flex;
  align-items: center;
  justify-content: center;
}
.sb-down {
  height: 5px;
  border-bottom: none;
}
.sb-up {
  width: 9px;
  height: 5px;
  background: #222;
  clip-path: polygon(50% 0,100% 100%,0 100%);
}
.sb-thumb {
  height: 594px;
  flex: none;
  background: #fff;
  border: 1px solid #999;
  border-top: none;
}
.sb-track {
  flex: 1;
}
.watermark {
  position: absolute;
  right: 16px;
  bottom: 10px;
  font-size: 13px;
  color: rgba(80,80,80,.55);
}
.collapse {
  position: absolute;
  right: 10px;
  bottom: 4px;
  width: 12px;
  height: 7px;
}
```
